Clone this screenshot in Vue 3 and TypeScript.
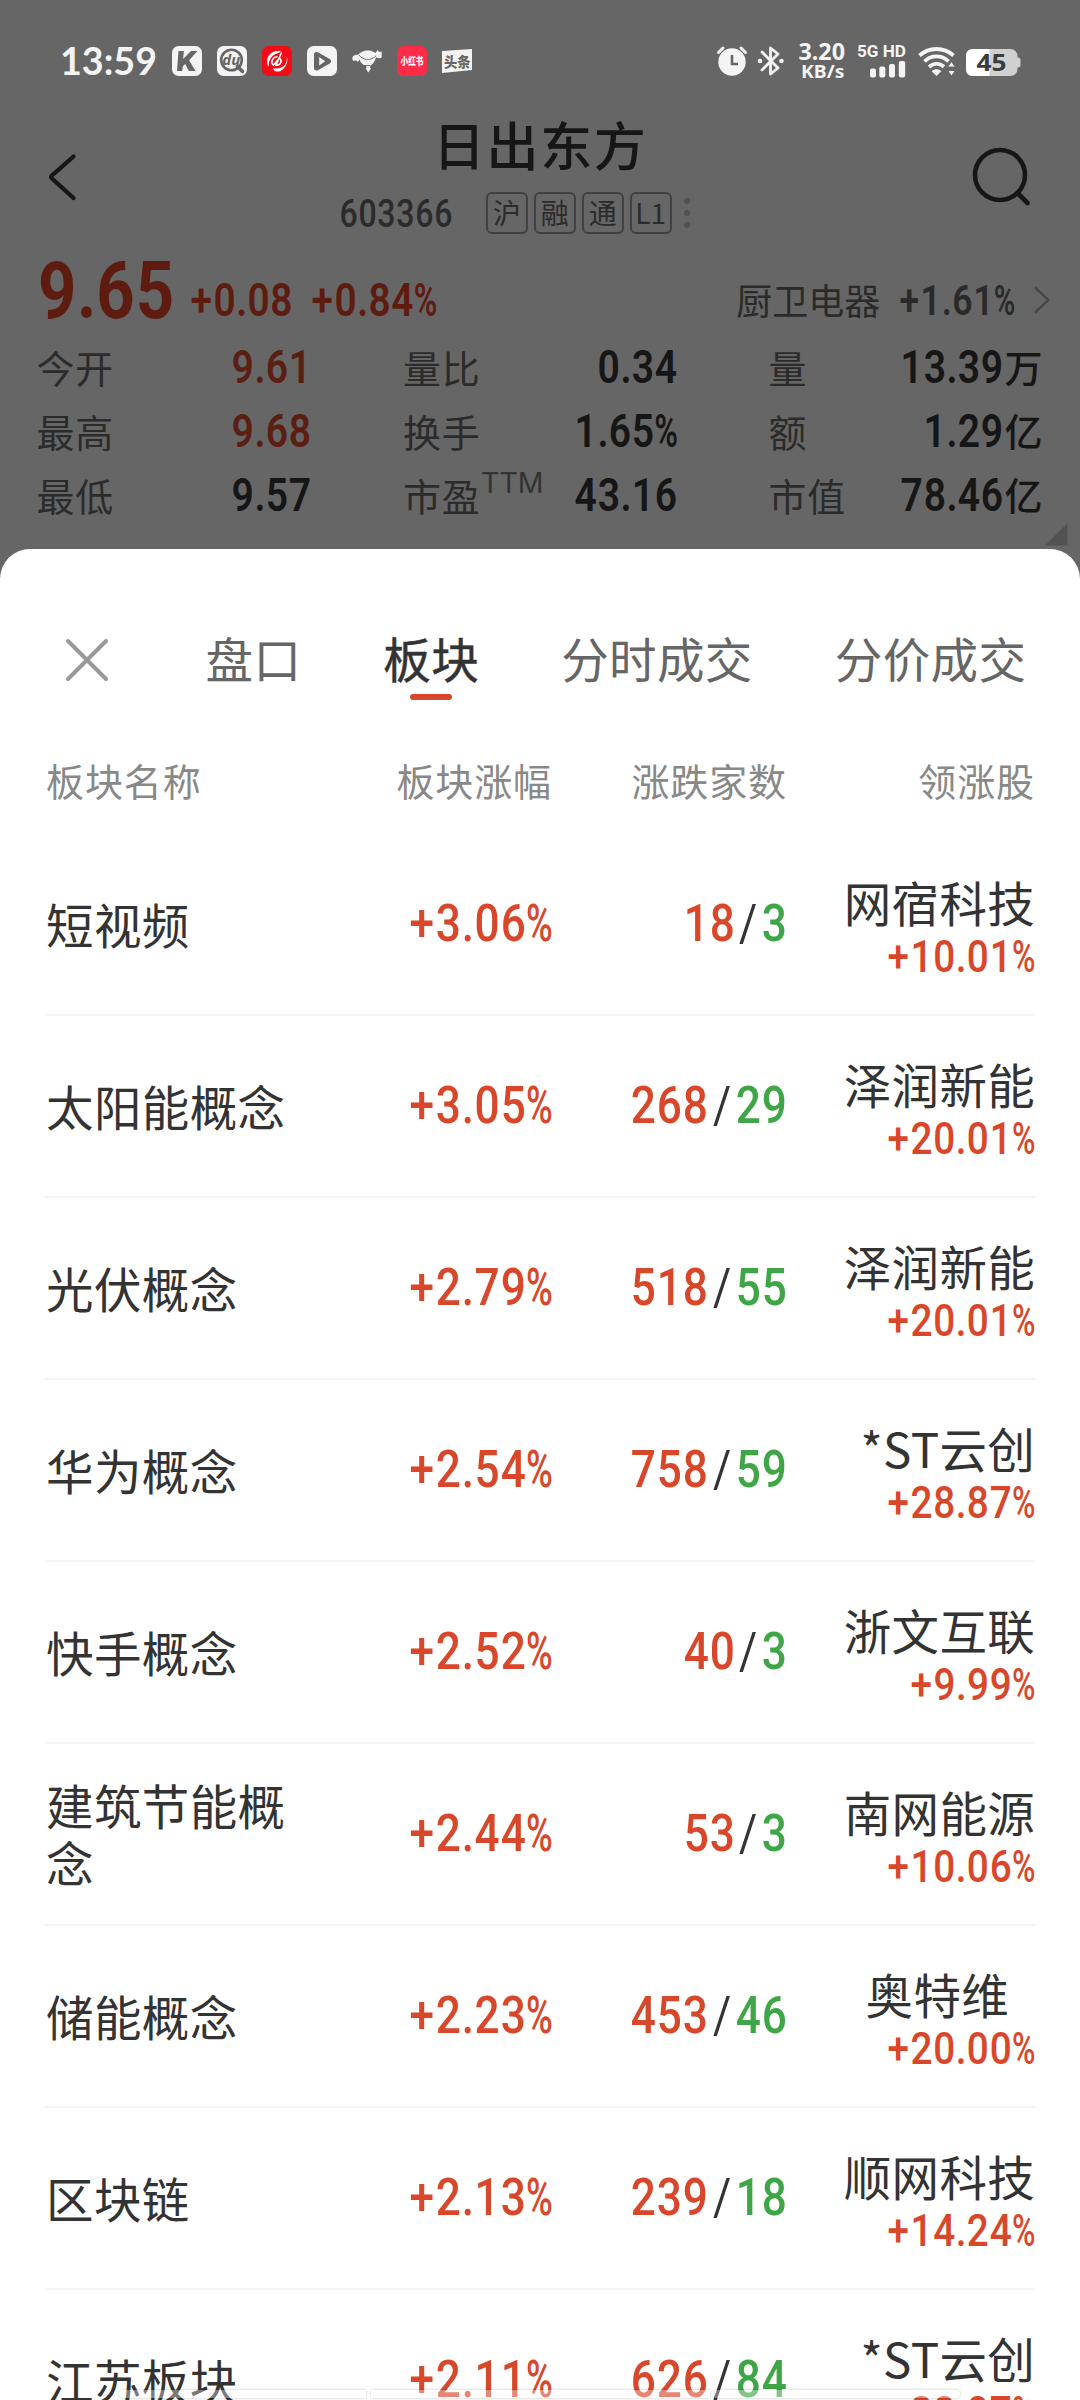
<script setup lang="ts">
import { h } from 'vue'
import type { FunctionalComponent } from 'vue'

interface FigureProps {
  text: string
  cap: number
  weight?: number
  pitch?: number
  dot?: number
}

/* Narrow tabular figures: every glyph sits in its own cell, the box is exactly cap-height tall. */
const Fig: FunctionalComponent<FigureProps> = (p) => {
  const size = p.cap / 0.711
  const cell = p.cap * (p.pitch ?? 0.7)
  const dot = p.cap * (p.dot ?? 0.34)
  const scale = (cell / (size * 0.5615)) * 0.95
  const natural: Record<string, number> = { '.': 0.263, '/': 0.412, '+': 0.567 }
  let x = 0
  const xs: number[] = []
  let percentX = -1
  for (const ch of p.text) {
    const w = ch === '.' ? dot : cell
    if (ch === '%') {
      percentX = x
    } else {
      const glyph = (natural[ch] ?? 0.5615) * size * scale
      xs.push((x + (w - glyph) / 2) / scale)
    }
    x += w
  }
  const kids: unknown[] = [
    h('text', {
      x: xs.map((v) => v.toFixed(2)).join(' '),
      y: p.cap,
      transform: `scale(${scale.toFixed(4)} 1)`,
    }, p.text.replace('%', '')),
  ]
  if (percentX >= 0) {
    const ps = (cell * 1.02) / (size * 0.732)
    kids.push(h('text', { x: percentX / ps, y: p.cap, transform: `scale(${ps.toFixed(4)} 1)` }, '%'))
  }
  return h('svg', {
    width: x.toFixed(1),
    height: p.cap,
    fill: 'currentColor',
    style: {
      display: 'block',
      overflow: 'visible',
      flex: 'none',
      fontFamily: 'Roboto, "Liberation Sans", sans-serif',
      fontSize: size.toFixed(2) + 'px',
      fontWeight: p.weight ?? 500,
    },
  }, kids as never)
}
Fig.props = ['text', 'cap', 'weight', 'pitch', 'dot']

const tags = ['沪', '融', '通', 'L1']

interface Stat { label: string; sup?: string; value: string; unit?: string; up?: boolean }
const stats: Stat[] = [
  { label: '今开', value: '9.61', up: true },
  { label: '量比', value: '0.34' },
  { label: '量', value: '13.39', unit: '万' },
  { label: '最高', value: '9.68', up: true },
  { label: '换手', value: '1.65%' },
  { label: '额', value: '1.29', unit: '亿' },
  { label: '最低', value: '9.57' },
  { label: '市盈', sup: 'TTM', value: '43.16' },
  { label: '市值', value: '78.46', unit: '亿' },
]

const tabs = ['盘口', '板块', '分时成交', '分价成交']
const active = '板块'

interface Sector { name: string; change: string; up: string; down: string; leader: string; gain: string }
const sectors: Sector[] = [
  { name: '短视频', change: '+3.06%', up: '18', down: '3', leader: '网宿科技', gain: '+10.01%' },
  { name: '太阳能概念', change: '+3.05%', up: '268', down: '29', leader: '泽润新能', gain: '+20.01%' },
  { name: '光伏概念', change: '+2.79%', up: '518', down: '55', leader: '泽润新能', gain: '+20.01%' },
  { name: '华为概念', change: '+2.54%', up: '758', down: '59', leader: '*ST云创', gain: '+28.87%' },
  { name: '快手概念', change: '+2.52%', up: '40', down: '3', leader: '浙文互联', gain: '+9.99%' },
  { name: '建筑节能概念', change: '+2.44%', up: '53', down: '3', leader: '南网能源', gain: '+10.06%' },
  { name: '储能概念', change: '+2.23%', up: '453', down: '46', leader: '奥特维', gain: '+20.00%' },
  { name: '区块链', change: '+2.13%', up: '239', down: '18', leader: '顺网科技', gain: '+14.24%' },
  { name: '江苏板块', change: '+2.11%', up: '626', down: '84', leader: '*ST云创', gain: '+28.87%' },
]
</script>

<template>
  <div class="screen">
    <header class="status">
      <svg class="time" width="94" height="28"><text x="-2" y="28" textLength="97" lengthAdjust="spacingAndGlyphs">13:59</text></svg>
      <div class="apps">
        <svg width="30" height="30" viewBox="0 0 30 30"><rect width="30" height="30" rx="6.5" fill="#f4f4f4" /><path d="M6.500 5h5.400l-.8 8L19 5h6.500l-8.400 9.200L23.500 25h-6.700l-3.600-7-2.400 2.300-.5 4.700H5z" fill="#666" /></svg>
        <svg width="30" height="30" viewBox="0 0 30 30"><rect width="30" height="30" rx="6.500" fill="#f4f4f4" /><circle cx="14.500" cy="14" r="10.300" fill="none" stroke="#666" stroke-width="2.600" /><path d="M20.500 20.500l5 5" stroke="#666" stroke-width="3.600" stroke-linecap="round" /><text x="14.300" y="18.800" class="du" text-anchor="middle">du</text></svg>
        <svg width="30" height="30" viewBox="0 0 30 30"><rect width="30" height="30" rx="6.500" fill="#f30b16" /><path d="M19 5.500C12 3.500 5 8.500 5 15.500c0 2.500.8 4 2 5C6.300 14 9.500 8.800 16 7.200zM24.500 10c1.600 7-3 12.500-9.500 12.500-1.800 0-3-.2-4-.6C11.500 26 16.500 26.600 20 24c4.800-3.500 6.500-9.500 4.500-14z" fill="#fff" /><path d="M11.500 19c-3.500-2-1-8.200 4-8.200M18 12.500c2.500 2.500.5 7-4 6.800l5.500-12.800M11 19.500l7-8" fill="none" stroke="#fff" stroke-width="1.600" /></svg>
        <svg width="30" height="30" viewBox="0 0 30 30"><rect width="30" height="30" rx="6.500" fill="#f4f4f4" /><path d="M9.500 8.500v13.500L21.500 15.200z" fill="#666" stroke="#666" stroke-width="5" stroke-linejoin="round" /><path d="M12.200 11v8.400l6-4.200z" fill="#f4f4f4" /></svg>
        <svg width="30" height="24" viewBox="0 0 30 24"><path d="M1 7c2-1 3.500-1.300 5-1.200C9 2.500 13 .8 17 1.600c3 .2 5 1.500 6.500 2.400L25.500 1l1.500 2 2.600-.5.2 6-2.300.8-3.500-.8c-1 4-3.500 7-6 8.500l.6 3-2.300 3.500-2.300-3.500.6-3C11 16.500 8.600 14 7.600 10.800L5.500 13 4 11.300 1 12l-.8-2.800z" fill="#f4f4f4" /><path d="M7 6c3 5 12 6.500 17 .8M12 16.500h6" stroke="#666" stroke-width=".9" fill="none" /></svg>
        <svg width="30" height="30" viewBox="0 0 30 30"><rect width="30" height="30" rx="6.500" fill="#ff2c47" /><text x="3.500" y="19" class="xhs" textLength="23" lengthAdjust="spacingAndGlyphs">小红书</text></svg>
        <svg width="30" height="24" viewBox="0 0 30 24"><path d="M0 2L30 0v21L0 24z" fill="#f4f4f4" /><text x="2" y="17.500" class="tt" textLength="26.500" lengthAdjust="spacingAndGlyphs">头条</text></svg>
      </div>
      <div class="sys">
        <svg width="30" height="30" viewBox="0 0 30 30"><circle cx="15" cy="16" r="13.700" fill="#f4f4f4" /><path d="M1.500 6.500L6 2M28.500 6.500L24 2" stroke="#f4f4f4" stroke-width="3" stroke-linecap="round" /><path d="M15 9v9h6" fill="none" stroke="#666" stroke-width="2.600" /></svg>
        <svg class="bt" width="28" height="30" viewBox="0 0 28 30"><path d="M5 6l16 16-7.500 6V2L21 8 5 24" fill="none" stroke="#f4f4f4" stroke-width="2.800" stroke-linejoin="round" stroke-linecap="round" /><circle cx="3" cy="15" r="2.300" fill="#f4f4f4" /><circle cx="24.500" cy="15" r="2.300" fill="#f4f4f4" /></svg>
        <svg class="speed" width="46" height="36" viewBox="0 0 46 36"><text x="-.5" y="16.500" font-size="22.500" textLength="46.500" lengthAdjust="spacingAndGlyphs">3.20</text><text x="2" y="35" font-size="18.500" textLength="43.500" lengthAdjust="spacingAndGlyphs">KB/s</text></svg>
        <svg class="signal" width="49" height="34" viewBox="0 0 49 34"><text x="0" y="12.500" font-size="16.500" textLength="49" lengthAdjust="spacingAndGlyphs">5G HD</text><rect x="13" y="24.500" width="6" height="9" rx="2" /><rect x="22.300" y="22.500" width="6" height="11" rx="2" /><rect x="32" y="20" width="6" height="13.500" rx="2" /><rect x="41.800" y="17" width="6.400" height="16.500" rx="2" /></svg>
        <svg class="wifi" width="38" height="30" viewBox="0 0 38 30"><g fill="none" stroke="#f4f4f4" stroke-width="3.800"><path d="M1.500 9.500C11 .8 26 .8 35.500 9.500" /><path d="M6.500 15.300c7-6.500 17-6.500 24 0" /><path d="M11 21c4.600-4.200 10.500-4.200 15-.3" /></g><path d="M13.700 25.200c2.800-2.500 6.800-2.500 9.600 0L18.500 30z" fill="#f4f4f4" /><path d="M33.500 15.500l4 5.500h-8zM33.500 30l-4-5.500h8z" fill="#f4f4f4" stroke="#666" stroke-width="1" /></svg>
        <svg class="battery" width="55" height="27" viewBox="0 0 55 27"><path d="M50 8.500h2q2.500 0 2.500 2.500v5q0 2.500-2.500 2.500h-2z" fill="#d0d0d0" /><rect width="51.500" height="27" rx="7" fill="#d0d0d0" /><path d="M23.500 0H7Q0 0 0 7v13q0 7 7 7h16.500z" fill="#fff" /><text x="10.500" y="22.300" textLength="30" lengthAdjust="spacingAndGlyphs">45</text></svg>
      </div>
    </header>

    <nav class="nav">
      <svg class="back" width="30" height="50" viewBox="0 0 30 50"><path d="M25.500 4.500L4 23.500q-1.500 1.500 0 3L25.500 46" fill="none" stroke="#161616" stroke-width="4.300" stroke-linecap="round" /></svg>
      <div class="heading">
        <h1>日出东方</h1>
        <div class="sub">
          <Fig text="603366" :cap="28" :pitch="0.677" class="code" />
          <div class="tags"><span v-for="t in tags" :key="t">{{ t }}</span></div>
          <svg width="6" height="30" viewBox="0 0 6 30" fill="#505050"><circle cx="3" cy="3" r="3" /><circle cx="3" cy="15" r="3" /><circle cx="3" cy="27" r="3" /></svg>
        </div>
      </div>
      <svg class="search" width="60" height="62" viewBox="0 0 60 62" fill="none" stroke="#161616" stroke-width="4.600"><circle cx="28" cy="28" r="25" /><path d="M46 46.500L55.500 56" stroke-linecap="round" /></svg>
    </nav>

    <section class="quote">
      <div class="priceline">
        <Fig text="9.65" :cap="56.500" :weight="700" :pitch="0.7" :dot="0.33" />
        <Fig text="+0.08" :cap="32.300" :weight="600" :pitch="0.71" :dot="0.34" class="delta" />
        <Fig text="+0.84%" :cap="32.300" :weight="600" :pitch="0.71" :dot="0.34" class="ratio" />
        <div class="industry">
          <span>厨卫电器</span>
          <Fig text="+1.61%" :cap="30" :weight="600" :pitch="0.7" :dot="0.36" />
          <svg width="18" height="28" viewBox="0 0 18 28"><path d="M2 1.500L15.500 14 2 26.500" fill="none" stroke="#474747" stroke-width="2.400" /></svg>
        </div>
      </div>
      <div class="stats">
        <div v-for="s in stats" :key="s.label" class="stat" :class="{ up: s.up }">
          <span class="label">{{ s.label }}<sup v-if="s.sup">{{ s.sup }}</sup></span>
          <Fig :text="s.value" :cap="32.300" :weight="600" :pitch="0.715" :dot="0.34" />
          <span v-if="s.unit" class="unit">{{ s.unit }}</span>
        </div>
      </div>
      <svg class="corner" width="23" height="23" viewBox="0 0 23 23"><path d="M22.500 0V22.500H0z" fill="#525252" /></svg>
    </section>

    <main class="sheet">
      <div class="tabs">
        <svg class="close" width="42" height="42" viewBox="0 0 42 42"><path d="M2 2l38 38M40 2L2 40" stroke="#999" stroke-width="4" stroke-linecap="round" /></svg>
        <span v-for="t in tabs" :key="t" class="tab" :class="{ on: t === active }">{{ t }}</span>
      </div>
      <div class="cols head">
        <span>板块名称</span><span>板块涨幅</span><span>涨跌家数</span><span>领涨股</span>
      </div>
      <div v-for="s in sectors" :key="s.name" class="cols row">
        <div class="name">{{ s.name }}</div>
        <div class="num red"><Fig :text="s.change" :cap="37.300" /></div>
        <div class="num">
          <Fig class="red" :text="s.up" :cap="37.300" />
          <Fig class="slash" text="/" :cap="37.300" :weight="400" />
          <Fig class="green" :text="s.down" :cap="37.300" />
        </div>
        <div class="lead">
          <span class="who" :class="{ short: s.leader.length === 3 }">{{ s.leader }}</span>
          <Fig class="red" :text="s.gain" :cap="32" :pitch="0.715" :dot="0.33" />
        </div>
      </div>
      <div class="handles"><i /><i /><i /></div>
    </main>
  </div>
</template>

<style>
body { margin: 0; }
</style>

<style scoped>
.screen {
  position: relative;
  display: flex;
  flex-direction: column;
  width: 1080px;
  height: 2400px;
  overflow: hidden;
  background: #666;
  color: #161616;
  font-family: 'Noto Sans CJK SC', sans-serif;
}
svg { display: block; flex: none; overflow: visible; }
.status { display: flex; align-items: center; height: 122px; padding-left: 62px; box-sizing: border-box; flex: none; }
.time { fill: #f4f4f4; font: 700 39px Lato, sans-serif; }
.apps { display: flex; align-items: center; gap: 15px; margin-left: 16px; }
.du { font: italic 700 15px 'Open Sans', sans-serif; fill: #666; }
.xhs { font: 900 10px 'Noto Sans CJK SC', sans-serif; fill: #fff; }
.tt { font: 900 14px 'Noto Sans CJK SC', sans-serif; fill: #666; }
.sys { display: flex; align-items: center; margin-left: 245px; }
.bt { margin-left: 10px; }
.speed { margin-left: 14px; fill: #f4f4f4; font-family: 'Noto Sans', sans-serif; font-weight: 700; }
.signal { margin-left: 12px; fill: #f4f4f4; font-family: Roboto, sans-serif; font-weight: 700; }
.wifi { margin-left: 12px; }
.battery { margin: 2px 0 0 10px; fill: #3c3c3c; font: 700 23px 'Noto Sans', sans-serif; }

.nav { display: flex; height: 118px; flex: none; }
.back { margin: 30px 0 0 48px; }
.heading { margin-left: 261px; width: 351px; }
h1 { margin: -11px 0 0 94px; font-size: 52px; font-weight: 500; line-height: 66px; letter-spacing: 1.600px; white-space: nowrap; }
.sub { display: flex; align-items: center; height: 42px; margin-top: 15px; color: #2b2b2b; }
.tags { display: flex; gap: 6px; margin: 0 12px 0 33px; }
.tags span {
  width: 42px; height: 42px; box-sizing: border-box; border: 2px solid #414141; border-radius: 6px;
  font-size: 28px; line-height: 36px; text-align: center;
}
.search { margin: 25px 0 0 282px; }

.quote { position: relative; height: 309px; flex: none; }
.priceline { display: flex; align-items: flex-end; height: 77.500px; padding-left: 36.500px; color: #5e1c10; }
.delta { margin: 0 0 1.500px 16px; }
.ratio { margin: 0 0 1.500px 18.500px; }
.industry { display: flex; align-items: center; margin-left: auto; padding-right: 29px; height: 36px; color: #2a2a2a; }
.industry span { font-size: 36px; line-height: 36px; margin: -1px 19px 0 0; }
.industry > :last-child { margin-left: 18px; }
.stats {
  display: grid; grid-template-columns: 275px 274px 274px; column-gap: 91.500px; grid-auto-rows: 64px;
  padding: 17.200px 0 0 36.500px;
}
.stat { display: flex; align-items: center; }
.stat.up { color: #5a1e13; }
.label { position: relative; margin: 0 auto 0 0; color: #2b2b2b; font-size: 38px; letter-spacing: .8px; line-height: 56px; }
.label sup { position: absolute; left: 78px; top: -4px; font: 400 28.500px/40px Inter, sans-serif; letter-spacing: 0; color: #333; }
.unit { font-size: 38px; font-weight: 500; line-height: 56px; margin: -2px 0 0 1px; }
.corner { position: absolute; left: 1045px; top: 283px; }

.sheet { position: relative; flex: 1; min-height: 0; overflow: hidden; background: #fff; border-radius: 30px 30px 0 0; color: #333; }
.tabs { display: flex; align-items: center; height: 222px; box-sizing: border-box; padding: 0 0 0 66px; gap: 82px; }
.close { margin-right: 15.500px; }
.tab { position: relative; font-size: 47.500px; letter-spacing: .4px; line-height: 70px; color: #666; margin-top: -5px; white-space: nowrap; }
.tab.on { color: #333; -webkit-text-stroke: .5px #333; }
.tab.on::after { content: ''; position: absolute; left: 27px; top: 71px; width: 42px; height: 6px; border-radius: 3px; background: #d9472b; }
.cols { display: grid; grid-template-columns: 270px 237px 235px 248px; margin: 0 45px; }
.head { height: 63px; color: #888; font-size: 38px; letter-spacing: .9px; line-height: 17px; }
.head span { text-align: right; white-space: nowrap; }
.head span:first-child { text-align: left; padding-left: 1px; }
.row { height: 182px; box-sizing: border-box; border-bottom: 2px solid #f4f4f4; }
.name { align-self: center; width: 242px; font-size: 47.500px; letter-spacing: .4px; line-height: 57px; margin: -2px 0 0 1px; }
.num { display: flex; justify-content: flex-end; padding-top: 70px; }
.red { color: #d9472b; }
.green { color: #3fa648; }
.lead { display: flex; flex-direction: column; align-items: flex-end; padding-top: 33px; }
.who { font-size: 47.500px; letter-spacing: .3px; line-height: 70px; white-space: nowrap; margin-bottom: 3px; }
.who.short { padding-right: 26px; }
.handles { position: absolute; left: 119px; top: 1840.500px; display: flex; gap: 5px; }
.handles i { width: 247px; height: 8px; border-radius: 4px 0 0 4px; background: rgba(255, 255, 255, .35); box-shadow: 0 0 3px rgba(0, 0, 0, .25); }
.handles i:nth-child(2) { width: 339px; border-radius: 0; }
.handles i:nth-child(3) { width: 245px; border-radius: 0 4px 4px 0; }
</style>
